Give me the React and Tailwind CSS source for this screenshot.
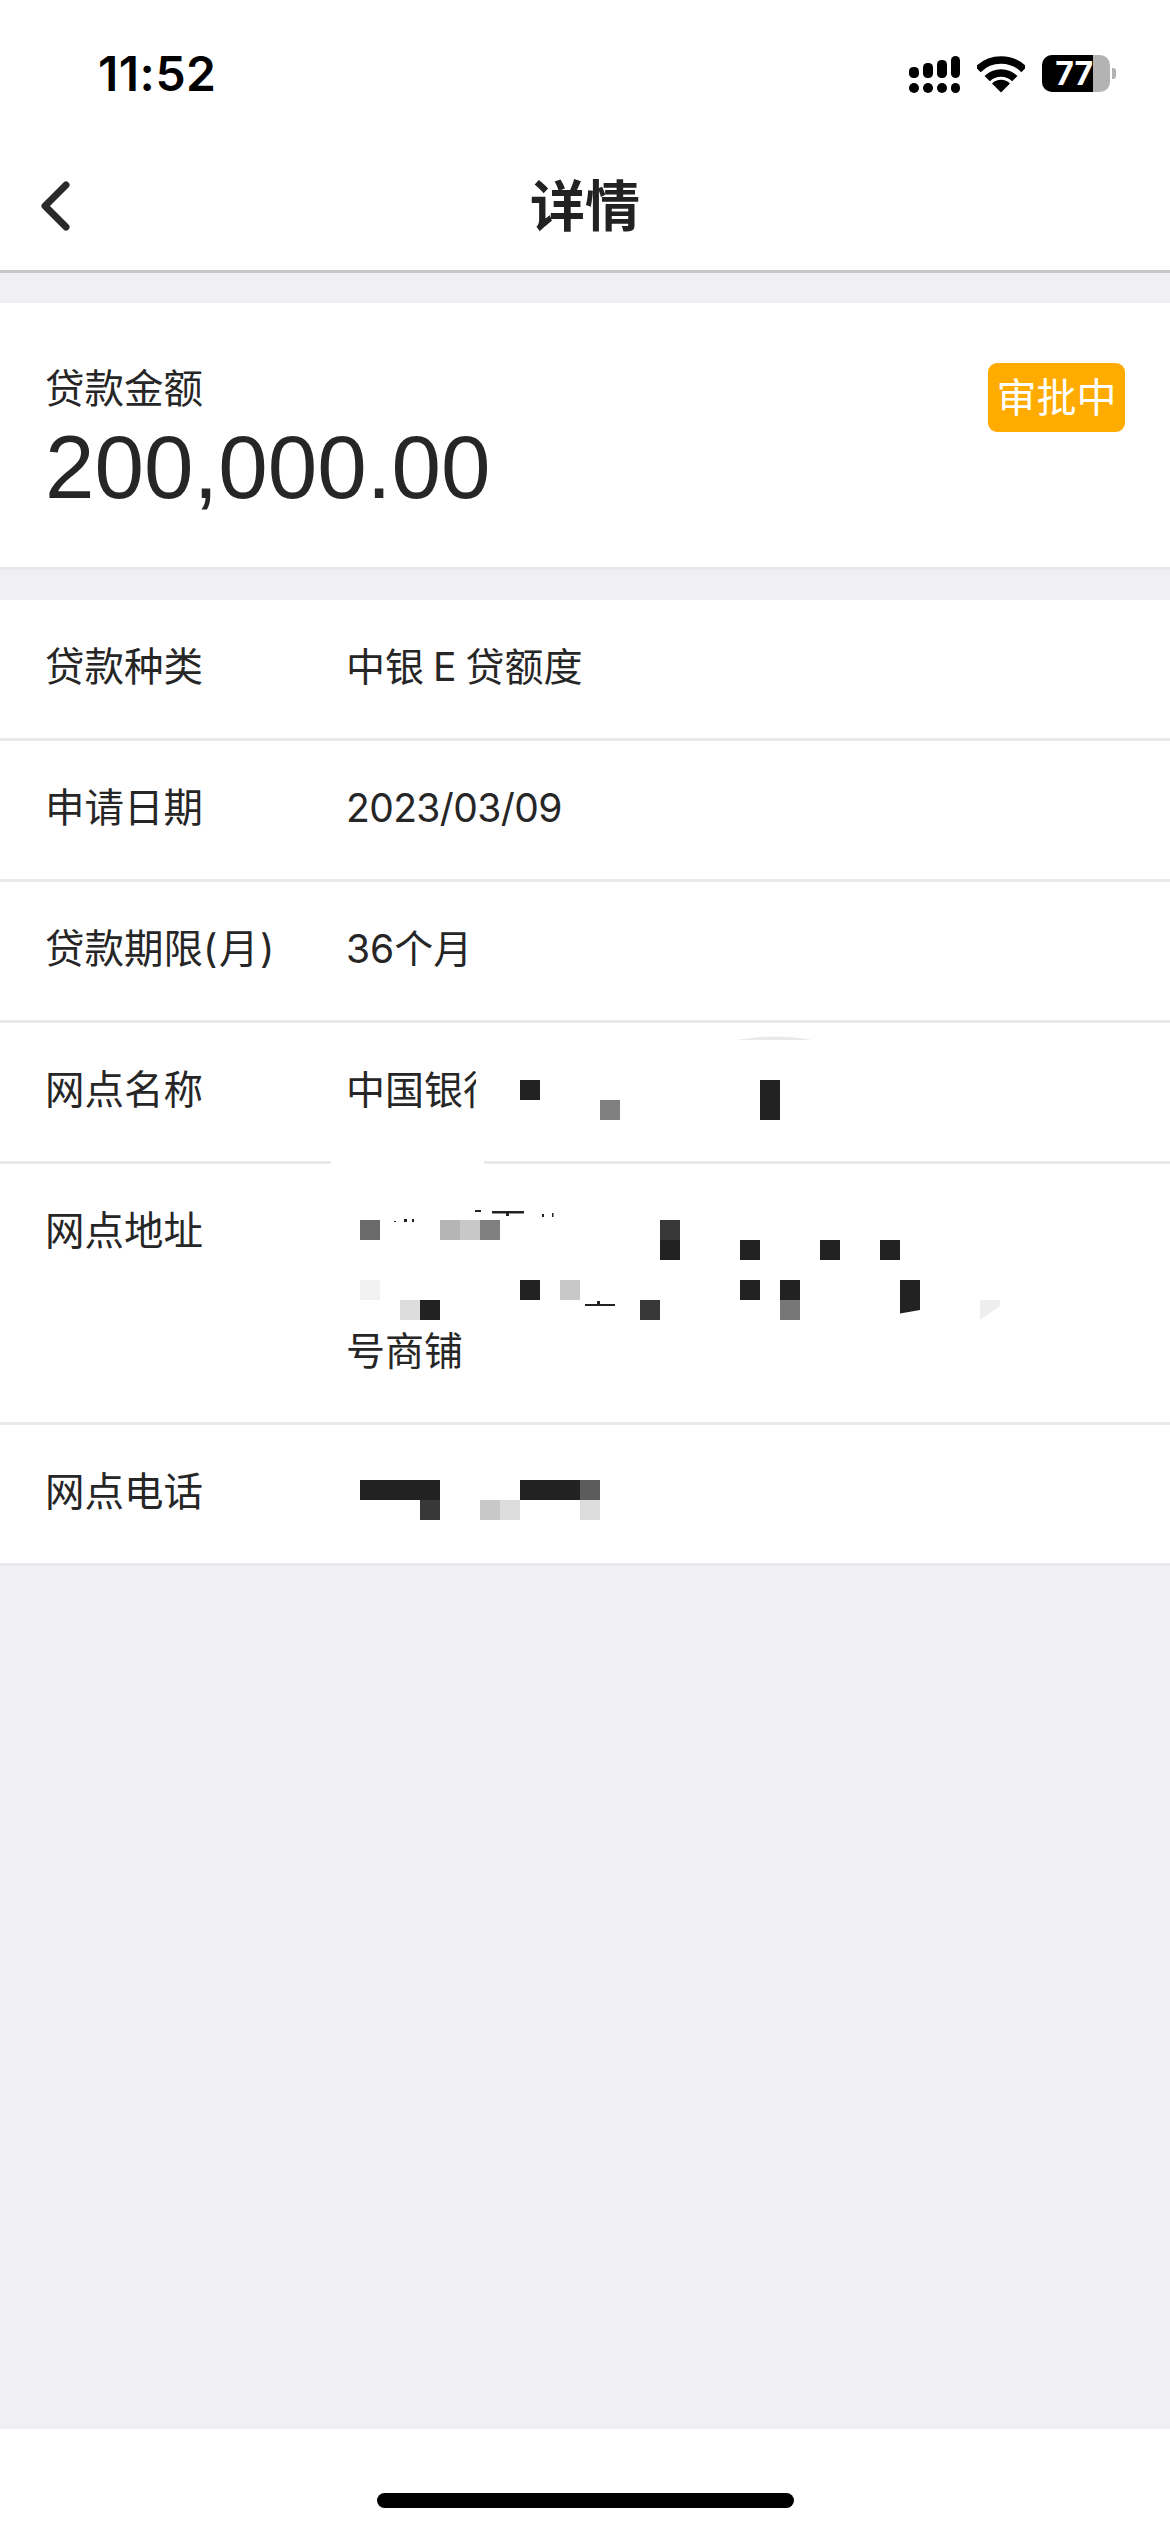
import React from "react";

const cell = {
  ".": "",
  a: "bg-[#222222]",
  b: "bg-[#383838]",
  c: "bg-[#6b6b6b]",
  d: "bg-[#808080]",
  e: "bg-[#b5b5b5]",
  f: "bg-[#c8c8c8]",
  g: "bg-[#dddddd]",
  h: "bg-[#f2f2f2]",
  i: "bg-[#777777]",
  j: "bg-[#5c5c5c]",
  k: "bg-[#222222] [clip-path:polygon(0_0,100%_0,100%_50%,0_68%)]",
  l: "bg-[#eeeeee] [clip-path:polygon(0_0,100%_0,100%_30%,0_100%)]",
};

function Mosaic({ rows, className }) {
  return (
    <div className={"grid auto-rows-[20px] grid-cols-[repeat(auto-fill,20px)] " + className}>
      {rows.join("").split("").map((c, i) => (
        <div key={i} className={cell[c]} />
      ))}
    </div>
  );
}

function Row({ label, children }) {
  return (
    <div className="relative flex border-b-[3px] border-[#e9e9eb] bg-white pt-[37px] pb-[41px]">
      <div className="w-[346px] shrink-0 pl-[45px] text-[39.5px] leading-[60px]">{label}</div>
      <div className="min-w-0 flex-1 text-[39px] leading-[60px]">{children}</div>
    </div>
  );
}

export default function App() {
  return (
    <div className="flex h-[2532px] w-[1170px] flex-col overflow-hidden bg-[#efeff4] font-['Inter','Noto_Sans_CJK_SC',sans-serif] text-[#262626]">
      {/* status bar */}
      <div className="flex h-[146px] shrink-0 items-start justify-between bg-white">
        <div className="ml-[98px] mt-[46px] font-['Inter',sans-serif] text-[48px] leading-[56px] font-semibold tracking-[0.5px] text-black">11:52</div>
        <div className="mr-[54px] mt-[55px] flex items-start">
          <svg width="51" height="37" viewBox="0 0 51 37" className="mr-[17px] mt-[1px]">
            <g fill="#000">
              <rect x="0" y="11" width="10" height="11" rx="4.5" />
              <rect x="14" y="7" width="10" height="15" rx="4.5" />
              <rect x="28" y="4" width="10" height="18" rx="4.5" />
              <rect x="42" y="0" width="9" height="22" rx="4.5" />
              <rect x="0" y="27" width="10" height="10" rx="5" />
              <rect x="14" y="27" width="10" height="10" rx="5" />
              <rect x="28" y="27" width="10" height="10" rx="5" />
              <rect x="42" y="27" width="9" height="10" rx="4.5" />
            </g>
          </svg>
          <svg width="48" height="37" viewBox="0 0 48 37" className="mr-[17px] mt-[1px]">
            <g fill="none" stroke="#000" strokeWidth="7.5">
              <path d="M1 13.5A32.5 32.5 0 0 1 47 13.5" />
              <path d="M10.2 22.7A19.5 19.5 0 0 1 37.8 22.7" />
            </g>
            <path d="M24 36.5L15 27.5A12.7 12.7 0 0 1 33 27.5Z" fill="#000" />
          </svg>
          <div className="relative flex h-[37px] w-[68px] overflow-hidden rounded-[10px] bg-[#b3b3b3]">
            <div className="flex h-full w-[51px] items-center justify-end bg-black font-['Inter',sans-serif] text-[32px] leading-none font-bold text-white">77</div>
          </div>
          <div className="ml-[2px] mt-[13px] h-[11px] w-[4px] rounded-r-[3px] bg-[#b3b3b3]" />
        </div>
      </div>

      {/* nav */}
      <div className="relative flex h-[127px] shrink-0 items-center justify-center border-b-[3px] border-[#c8c8cc] bg-white">
        <svg width="32" height="50" viewBox="0 0 32 50" className="absolute left-[39px] top-[35px]">
          <path d="M27 4L6 25L27 46" fill="none" stroke="#2a2a2a" strokeWidth="7" strokeLinecap="round" strokeLinejoin="round" />
        </svg>
        <div className="pb-[5px] text-[55px] leading-[64px] font-bold text-[#222222]">详情</div>
      </div>

      <div className="h-[30px] shrink-0" />

      {/* amount */}
      <div className="flex h-[267px] shrink-0 items-start justify-between border-b-[3px] border-[#e8e8ea] bg-white">
        <div className="pl-[45px] pt-[56px]">
          <div className="text-[39.5px] leading-[60px]">贷款金额</div>
          <div className="font-['Liberation_Sans',sans-serif] text-[89px] leading-[97px]">200,000.00</div>
        </div>
        <div className="mr-[45px] mt-[60px] flex h-[69px] w-[137px] items-center justify-center rounded-[9px] bg-[#ffab00] text-[40px] leading-none text-white">审批中</div>
      </div>

      <div className="h-[30px] shrink-0" />

      {/* details */}
      <div className="shrink-0">
        <Row label="贷款种类"><span className="[word-spacing:-2px]">中银 E 贷额度</span></Row>
        <Row label="申请日期"><span className="tracking-[-0.6px]">2023/03/09</span></Row>
        <Row label={<>贷款期限(<span className="px-[1.5px]">月</span>)</>}>36个月</Row>
        <Row label="网点名称">
          <div className="flex">
            <div className="w-[130px] shrink-0 overflow-hidden whitespace-nowrap">中国银行</div>
            <Mosaic
              className="ml-[44px] mt-[20px] w-[260px]"
              rows={["a...........a", "....d.......a"]}
            />
          </div>
          <svg width="76" height="6" viewBox="0 0 76 6" className="absolute left-[736px] top-[12px]">
            <path d="M0 5Q40 -2 76 5Z" fill="#e9e9eb" />
          </svg>
          <div className="absolute left-[331px] top-[138px] h-[3px] w-[153px] bg-white" />
        </Row>
        <Row label="网点地址">
          <Mosaic
            className="ml-[14px] mt-[19px] mb-[1px] w-[640px]"
            rows={[
              "c...efd........b................",
              "...............a...a...a..a.....",
              "................................",
              "h.......a.f........a.a.....a....",
              "..ga..........b......i.....k...l",
            ]}
          />
          <div>号商铺</div>
          <svg width="170" height="12" viewBox="0 0 170 12" className="absolute left-[392px] top-[46px]">
            <g fill="#222222">
              <rect x="83" y="0" width="6" height="2" />
              <rect x="100" y="1" width="32" height="2.5" />
              <rect x="114" y="3" width="3" height="3" />
              <rect x="150" y="4" width="2" height="3" />
              <rect x="160" y="3" width="1.5" height="4" />
              <rect x="2" y="11" width="2" height="1" />
              <rect x="12" y="9" width="3" height="3" />
              <rect x="20" y="9" width="2" height="3" />
            </g>
          </svg>
          <svg width="60" height="6" viewBox="0 0 60 6" className="absolute left-[585px] top-[137px]">
            <rect x="0" y="3" width="30" height="2" fill="#222222" />
            <rect x="12" y="0" width="3" height="3" fill="#222222" />
          </svg>
        </Row>
        <Row label="网点电话">
          <Mosaic
            className="ml-[14px] mt-[18px] mb-[2px] w-[240px]"
            rows={["aaaa....aaaj", "...b..fg...g"]}
          />
        </Row>
      </div>

      <div className="flex-1" />

      {/* home */}
      <div className="flex h-[103px] shrink-0 justify-center bg-white pt-[64px]">
        <div className="h-[15px] w-[417px] rounded-full bg-black" />
      </div>
    </div>
  );
}
